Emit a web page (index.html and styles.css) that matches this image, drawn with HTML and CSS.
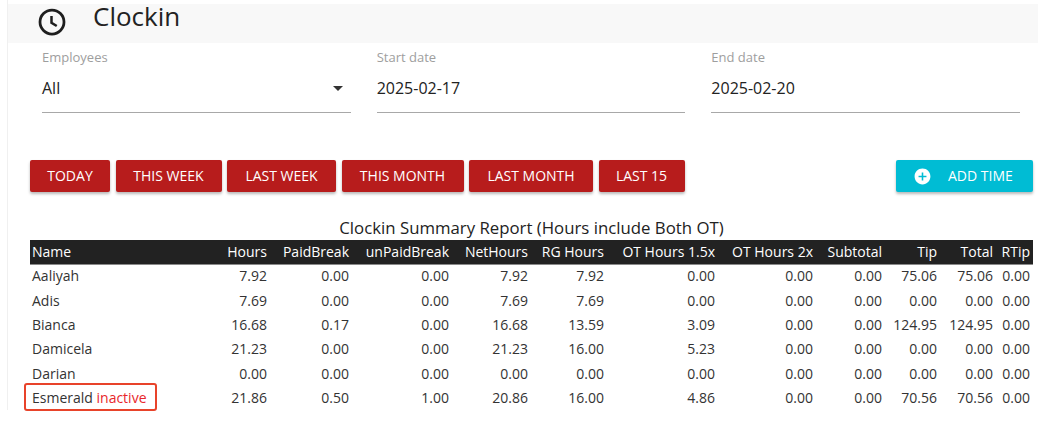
FILE: index.html
```html
<!DOCTYPE html>
<html>
<head>
<meta charset="utf-8">
<link rel="stylesheet" href="styles.css">
</head>
<body>
<div class="page">
  <div class="topbar">
    <svg class="clock" viewBox="0 0 24 24" width="30" height="30"><circle cx="12" cy="12" r="9.6" fill="none" stroke="#1e1e1e" stroke-width="2.2"/><path d="M11.6 7.2v5.4l4.2 2.6" fill="none" stroke="#1e1e1e" stroke-width="2" stroke-linejoin="miter"/></svg>
    <h1 class="title">Clockin</h1>
  </div>
  <div class="content">
    <div class="fields">
      <div class="field">
        <div class="label">Employees</div>
        <div class="value">All<span class="caret"></span></div>
      </div>
      <div class="field">
        <div class="label">Start date</div>
        <div class="value">2025-02-17</div>
      </div>
      <div class="field">
        <div class="label">End date</div>
        <div class="value">2025-02-20</div>
      </div>
    </div>
    <div class="actions">
      <div class="ranges">
        <button class="btn red w-today">TODAY</button>
        <button class="btn red w-thisweek">THIS WEEK</button>
        <button class="btn red w-lastweek">LAST WEEK</button>
        <button class="btn red w-thismonth">THIS MONTH</button>
        <button class="btn red w-lastmonth">LAST MONTH</button>
        <button class="btn red w-last15">LAST 15</button>
      </div>
      <button class="btn cyan"><svg class="plus" viewBox="0 0 24 24" width="19" height="19"><path fill="#fff" d="M12 2C6.48 2 2 6.48 2 12s4.48 10 10 10 10-4.48 10-10S17.52 2 12 2zm5 11h-4v4h-2v-4H7v-2h4V7h2v4h4v2z"/></svg>ADD TIME</button>
    </div>
    <div class="report-title">Clockin Summary Report (Hours include Both OT)</div>
    <table class="report">
      <thead>
        <tr><th>Name</th><th>Hours</th><th>PaidBreak</th><th>unPaidBreak</th><th>NetHours</th><th>RG Hours</th><th>OT Hours 1.5x</th><th>OT Hours 2x</th><th>Subtotal</th><th>Tip</th><th>Total</th><th>RTip</th></tr>
      </thead>
      <tbody>
        <tr><td>Aaliyah</td><td>7.92</td><td>0.00</td><td>0.00</td><td>7.92</td><td>7.92</td><td>0.00</td><td>0.00</td><td>0.00</td><td>75.06</td><td>75.06</td><td>0.00</td></tr>
        <tr><td>Adis</td><td>7.69</td><td>0.00</td><td>0.00</td><td>7.69</td><td>7.69</td><td>0.00</td><td>0.00</td><td>0.00</td><td>0.00</td><td>0.00</td><td>0.00</td></tr>
        <tr><td>Bianca</td><td>16.68</td><td>0.17</td><td>0.00</td><td>16.68</td><td>13.59</td><td>3.09</td><td>0.00</td><td>0.00</td><td>124.95</td><td>124.95</td><td>0.00</td></tr>
        <tr><td>Damicela</td><td>21.23</td><td>0.00</td><td>0.00</td><td>21.23</td><td>16.00</td><td>5.23</td><td>0.00</td><td>0.00</td><td>0.00</td><td>0.00</td><td>0.00</td></tr>
        <tr><td>Darian</td><td>0.00</td><td>0.00</td><td>0.00</td><td>0.00</td><td>0.00</td><td>0.00</td><td>0.00</td><td>0.00</td><td>0.00</td><td>0.00</td><td>0.00</td></tr>
        <tr><td class="marked">Esmerald <span class="inactive">inactive</span><span class="highlight"></span></td><td>21.86</td><td>0.50</td><td>1.00</td><td>20.86</td><td>16.00</td><td>4.86</td><td>0.00</td><td>0.00</td><td>70.56</td><td>70.56</td><td>0.00</td></tr>
      </tbody>
    </table>
  </div>
</div>
</body>
</html>
```
FILE: styles.css
```css
* { box-sizing: border-box; }
html, body { margin: 0; padding: 0; background: #fff; }
body {
  font-family: "Open Sans", "Liberation Sans", sans-serif;
  color: #333;
  width: 1038px;
  height: 426px;
  overflow: hidden;
}
.page {
  margin-left: 7px;
  border-left: 1px solid #f0f0f0;
  padding-top: 4px;
  height: 410px;
}
.topbar {
  height: 39px;
  background: #f8f8f8;
  display: flex;
  align-items: flex-start;
}
.clock {
  margin-left: 29px;
  margin-top: 3px;
  display: block;
}
.title {
  margin: -3px 0 0 26px;
  font-size: 26px;
  line-height: 30px;
  font-weight: 400;
  color: #222;
}
.content {
  padding: 0 5px 0 22px;
}
.fields {
  display: grid;
  grid-template-columns: 1fr 1fr 1fr;
  column-gap: 26px;
  margin: 6px 13px 0 12px;
}
.field {
  border-bottom: 1px solid #a8a8a8;
  padding-bottom: 12px;
}
.label {
  font-size: 13px;
  line-height: 16px;
  color: #9e9e9e;
}
.value {
  position: relative;
  margin-top: 11px;
  font-size: 16px;
  line-height: 24px;
  color: #222;
}
.caret {
  position: absolute;
  right: 8px;
  top: 10px;
  width: 0;
  height: 0;
  border-left: 5px solid transparent;
  border-right: 5px solid transparent;
  border-top: 5px solid #333;
}
.actions {
  display: flex;
  justify-content: space-between;
  margin-top: 47px;
}
.ranges {
  display: flex;
  gap: 5.5px;
}
.btn {
  font-family: "Open Sans", "Liberation Sans", sans-serif;
  font-size: 14px;
  font-weight: 500;
  height: 32px;
  line-height: 32px;
  padding: 0;
  border: 0;
  border-radius: 2px;
  color: #fff;
  box-shadow: 0 2px 3px rgba(0,0,0,0.28);
  display: flex;
  align-items: center;
  justify-content: center;
  white-space: nowrap;
}
.red { background: #b71c1c; }
.w-today { width: 80px; }
.w-thisweek { width: 106px; }
.w-lastweek { width: 109px; }
.w-thismonth { width: 122px; }
.w-lastmonth { width: 124px; }
.w-last15 { width: 86px; }
.cyan { background: #00bcd4; width: 137px; justify-content: flex-start; padding-left: 16.5px; }
.plus { display: block; margin-right: 16.5px; }
.report-title {
  margin-top: 24px;
  text-align: center;
  font-size: 16.8px;
  line-height: 23px;
  color: #222;
}
.report {
  width: 1003px;
  table-layout: fixed;
  border-collapse: collapse;
  font-size: 14px;
  margin-top: 1px;
}
.report th {
  background: #222;
  color: #fff;
  font-weight: 400;
  height: 24px;
  line-height: 20px;
  padding: 1px 3px 1px 3px;
  border-bottom: 1px solid #8a8a8a;
  text-align: right;
  white-space: nowrap;
}
.report td {
  height: 24.4px;
  line-height: 20px;
  padding: 0 3px;
  text-align: right;
  color: #333;
  white-space: nowrap;
}
.report th:first-child, .report td:first-child { text-align: left; padding-left: 2px; }
.report th:nth-child(1) { width: 180px; }
.report th:nth-child(2) { width: 60px; }
.report th:nth-child(3) { width: 82px; }
.report th:nth-child(4) { width: 100px; }
.report th:nth-child(5) { width: 79px; }
.report th:nth-child(6) { width: 76px; }
.report th:nth-child(7) { width: 111px; }
.report th:nth-child(8) { width: 98px; }
.report th:nth-child(9) { width: 69px; }
.report th:nth-child(10) { width: 55px; }
.report th:nth-child(11) { width: 56px; }
.report th:nth-child(12) { width: 37px; }
.marked { position: relative; }
.inactive { color: #e8262b; }
.highlight {
  position: absolute;
  left: -6px;
  top: -3px;
  width: 133px;
  height: 28px;
  border: 2px solid #e8432a;
  border-radius: 3px;
}
```
